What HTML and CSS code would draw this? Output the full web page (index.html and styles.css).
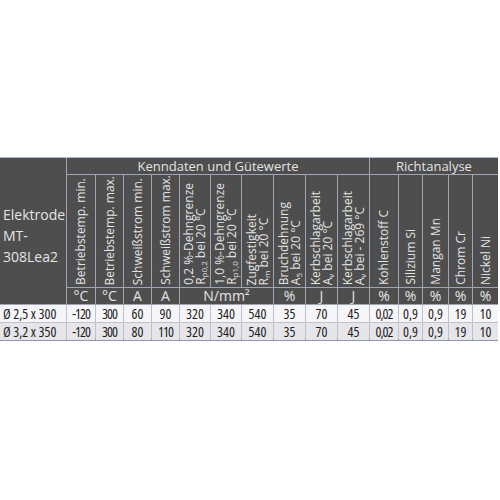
FILE: index.html
```html
<!DOCTYPE html>
<html lang="de">
<head>
<meta charset="utf-8">
<title>MT-308Lea2</title>
<link rel="stylesheet" href="styles.css">
</head>
<body>
<div class="spec">
  <div class="h el">Elektrode MT-308Lea2</div>
  <div class="h grp span10">Kenndaten und Gütewerte</div>
  <div class="h grp span5">Richtanalyse</div>

  <div class="h v"><div class="vt">Betriebstemp. min.</div></div>
  <div class="h v"><div class="vt">Betriebstemp. max.</div></div>
  <div class="h v"><div class="vt">Schweißstrom min.</div></div>
  <div class="h v"><div class="vt">Schweißstrom max.</div></div>
  <div class="h v"><div class="vt">0,2 %-Dehngrenze<br>R<sub>p0,2</sub> bei 20 °C</div></div>
  <div class="h v"><div class="vt">1,0 %-Dehngrenze<br>R<sub>p1,0</sub> bei 20 °C</div></div>
  <div class="h v"><div class="vt">Zugfestigkeit<br>R<sub>m</sub> bei 20 °C</div></div>
  <div class="h v"><div class="vt">Bruchdehnung<br>A<sub>5</sub> bei 20 °C</div></div>
  <div class="h v"><div class="vt">Kerbschlagarbeit<br>A<sub>v</sub> bei 20 °C</div></div>
  <div class="h v"><div class="vt">Kerbschlagarbeit<br>A<sub>v</sub> bei - 269 °C</div></div>
  <div class="h v"><div class="vt">Kohlenstoff C</div></div>
  <div class="h v"><div class="vt">Silizium Si</div></div>
  <div class="h v"><div class="vt">Mangan Mn</div></div>
  <div class="h v"><div class="vt">Chrom Cr</div></div>
  <div class="h v"><div class="vt">Nickel Ni</div></div>

  <div class="h u">°C</div>
  <div class="h u">°C</div>
  <div class="h u">A</div>
  <div class="h u">A</div>
  <div class="h u span3">N/mm²</div>
  <div class="h u">%</div>
  <div class="h u">J</div>
  <div class="h u">J</div>
  <div class="h u">%</div>
  <div class="h u">%</div>
  <div class="h u">%</div>
  <div class="h u">%</div>
  <div class="h u">%</div>

  <div class="d a name">Ø 2,5 x 300</div>
  <div class="d a sq">-120</div>
  <div class="d a sq">300</div>
  <div class="d a">60</div>
  <div class="d a">90</div>
  <div class="d a">320</div>
  <div class="d a">340</div>
  <div class="d a">540</div>
  <div class="d a">35</div>
  <div class="d a">70</div>
  <div class="d a">45</div>
  <div class="d a sq">0,02</div>
  <div class="d a">0,9</div>
  <div class="d a">0,9</div>
  <div class="d a">19</div>
  <div class="d a">10</div>

  <div class="d b name">Ø 3,2 x 350</div>
  <div class="d b sq">-120</div>
  <div class="d b sq">300</div>
  <div class="d b">80</div>
  <div class="d b sq">110</div>
  <div class="d b">320</div>
  <div class="d b">340</div>
  <div class="d b">540</div>
  <div class="d b">35</div>
  <div class="d b">70</div>
  <div class="d b">45</div>
  <div class="d b sq">0,02</div>
  <div class="d b">0,9</div>
  <div class="d b">0,9</div>
  <div class="d b">19</div>
  <div class="d b">10</div>
</div>
</body>
</html>
```

FILE: styles.css
```css
html, body {
  margin: 0;
  padding: 0;
  background: #ffffff;
}

body {
  padding-top: 157px;
}

.spec {
  width: 498px;
  box-sizing: border-box;
  display: grid;
  grid-template-columns: 66px 28px 27px 27px 27px 30px 30px 31px 31px 31px 31px 28px 23px 25px 23px 25px;
  grid-template-rows: 16px 112px 16px 17px 17px;
  gap: 1px;
  padding: 1px 1px 1px 0;
  background: linear-gradient(to bottom, #a9b7cc 0, #a9b7cc 1px, #9ea6b4 1px, #9ea6b4 148px, #bcc3cf 148px, #bcc3cf 182px, #8e98aa 182px);
  font-family: "Open Sans", "Noto Sans", sans-serif;
}

.h {
  background: #4e4e4e;
  color: #e4e4e4;
  text-align: center;
}

.el {
  grid-row: 1 / span 3;
  text-align: left;
  font-size: 14px;
  line-height: 21px;
  padding: 46px 0 0 3px;
}

.span10 { grid-column: span 10; }
.span5 { grid-column: span 5; }
.span3 { grid-column: span 3; }

.grp {
  font-size: 13px;
  line-height: 16px;
}

.v {
  display: flex;
  align-items: flex-end;
  justify-content: center;
  overflow: hidden;
}

.vt {
  writing-mode: vertical-rl;
  transform: rotate(180deg);
  margin-bottom: 2px;
  font-size: 12px;
  line-height: 12px;
  white-space: nowrap;
  text-align: left;
}

.vt sub {
  font-size: 8px;
  line-height: 0;
}

.u {
  font-size: 14px;
  line-height: 16px;
}

.d {
  text-align: center;
  font-size: 14px;
  font-stretch: 87.5%;
  line-height: 17px;
  color: #1e1e1e;
  white-space: nowrap;
}

.d.a { background: #f6f6f8; }
.d.b { background: #e5e5ea; }

.d.name {
  text-align: left;
  padding-left: 3px;
  font-stretch: 82%;
}

.d.sq {
  letter-spacing: -1px;
}
```
